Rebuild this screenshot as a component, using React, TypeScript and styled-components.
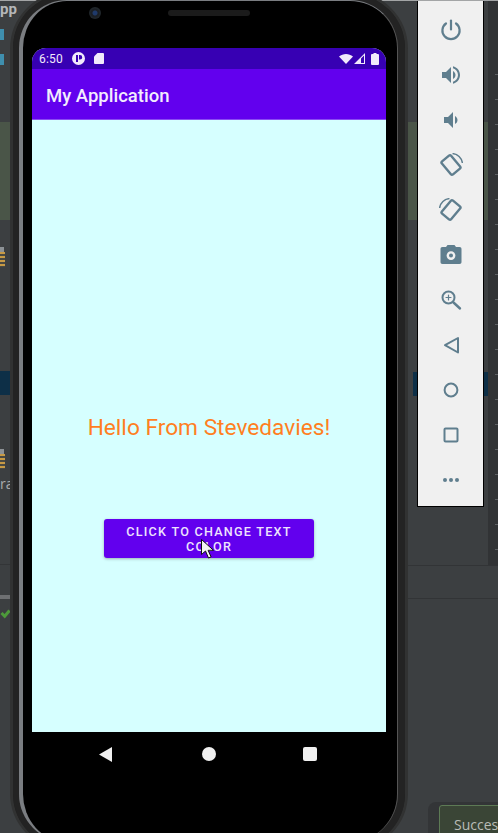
import React from "react";
import styled, { createGlobalStyle } from "styled-components";

const GlobalStyle = createGlobalStyle`
  html, body {
    margin: 0;
    padding: 0;
    background: #3c3f41;
  }
`;

const Stage = styled.div`
  width: 498px;
  height: 833px;
  overflow: hidden;
  position: relative;
  background: #3c3f41;
  font-family: Roboto, "Liberation Sans", sans-serif;
`;

const TopEdge = styled.div`
  height: 1px;
  background: #a3a5a6;
`;

const Desk = styled.div`
  display: flex;
  height: 832px;
`;

/* the strip of the IDE showing left of the phone */
const LeftGutter = styled.div`
  width: 10px;
  flex: none;
  display: flex;
  flex-direction: column;
  align-items: flex-start;
`;

const ClippedTitle = styled.div`
  margin-top: 0;
  font-size: 15px;
  line-height: 16px;
  font-weight: 700;
  color: #b4b6b8;
`;

const FileMark = styled.div<{ $top: number }>`
  margin-top: ${p => p.$top}px;
  width: 4px;
  height: 11px;
  flex: none;
  background: #3f8fae;
`;

const EditorBand = styled.div<{ $top: number; $height: number; $color: string; $inset?: number }>`
  margin-top: ${p => p.$top}px;
  margin-left: ${p => p.$inset ?? 0}px;
  align-self: stretch;
  height: ${p => p.$height}px;
  flex: none;
  background: ${p => p.$color};
`;

const GreyBlock = styled.div<{ $top: number }>`
  margin-top: ${p => p.$top}px;
  width: 4px;
  height: 5px;
  flex: none;
  background: #8d9296;
`;

const StackedLines = styled.div`
  width: 5px;
  height: 15px;
  flex: none;
  background: repeating-linear-gradient(#c79a45 0 2px, #4a4a44 2px 4px);
`;

const GutterLabel = styled.div`
  margin-top: 7px;
  font-family: "Open Sans", sans-serif;
  font-size: 14px;
  line-height: 16px;
  color: #a9abad;
`;

const CheckIcon = styled.svg`
  margin-top: 10px;
  margin-left: 1px;
  flex: none;
  overflow: visible;
`;

/* phone */
const PhoneShell = styled.div`
  width: 398px;
  height: 860px;
  flex: none;
  margin-top: -10px;
  box-sizing: border-box;
  border: 3px solid #313232;
  border-radius: 58px;
  background: #242424;
`;

const PhoneBody = styled.div`
  height: 100%;
  box-sizing: border-box;
  border: solid #232323;
  border-width: 6px 7px 6px 6px;
  border-radius: 54px;
  background: #2e2e2e;
`;

const MetalRim = styled.div`
  height: 100%;
  box-sizing: border-box;
  border: solid #7a7d81;
  border-width: 1px 1px 0 4px;
  border-right-color: #555;
  border-radius: 48px;
  background: #000;
  overflow: hidden;
  padding: 0 11px 0 9px;
`;

const TopBezel = styled.div`
  height: 47px;
  display: flex;
  align-items: flex-start;
  padding-top: 6px;
  box-sizing: border-box;
`;

const FrontCamera = styled.div`
  width: 12px;
  height: 12px;
  margin-left: 57px;
  border-radius: 50%;
  background: radial-gradient(circle, #1f3a6a 0 2px, #1b1f24 3px 4px, #20262b 5px);
`;

const Speaker = styled.div`
  width: 82px;
  height: 6px;
  margin: 3px 0 0 67px;
  border-radius: 3px;
  background: #1b1b1b;
`;

const Screen = styled.div`
  height: 684px;
  display: flex;
  flex-direction: column;
  border-radius: 14px 14px 0 0;
  overflow: hidden;
  background: #d6ffff;
`;

const StatusBar = styled.div`
  height: 21px;
  flex: none;
  display: flex;
  align-items: center;
  padding: 0 7px;
  background: #3700b3;
  color: #f1eafb;
  font-size: 12px;
`;

const StatusTime = styled.span`
  width: 34px;
  letter-spacing: 0.2px;
`;

const StatusIcon = styled.svg<{ $left?: number }>`
  flex: none;
  margin-left: ${p => p.$left ?? 0}px;
`;

const AppBar = styled.div`
  height: 51px;
  flex: none;
  display: flex;
  align-items: center;
  padding: 4px 0 0 14px;
  box-sizing: border-box;
  border-bottom: 1px solid #8a4df2;
  background: #6200ee;
  color: #f3ecfe;
  font-size: 18.5px;
  font-weight: 500;
`;

const Content = styled.div`
  flex: 1;
  display: flex;
  flex-direction: column;
  align-items: center;
  padding-top: 294px;
`;

const Greeting = styled.div`
  font-size: 22.7px;
  line-height: 28px;
  color: #ff7f1f;
`;

const ActionButton = styled.button`
  position: relative;
  width: 210px;
  height: 39px;
  margin-top: 77px;
  padding: 4px 16px;
  border: 0;
  border-radius: 3px;
  background: #6200ee;
  color: #eee3fd;
  font-family: inherit;
  font-size: 12.6px;
  font-weight: 500;
  line-height: 15px;
  letter-spacing: 1.25px;
  text-transform: uppercase;
  box-shadow: 0 1px 3px rgba(0, 0, 0, 0.3);
`;

const Pointer = styled.svg`
  position: absolute;
  left: 97px;
  top: 20px;
`;

const NavBar = styled.div`
  height: 44px;
  display: flex;
  align-items: center;
  justify-content: space-between;
  padding: 0 69px 0 67px;
`;

const NavIcon = styled.svg<{ $shift?: number }>`
  flex: none;
  margin-left: ${p => p.$shift ?? 0}px;
`;

/* everything right of the phone */
const RightRail = styled.div`
  flex: 1;
  min-width: 0;
  display: flex;
  flex-direction: column;
`;

const RailTop = styled.div`
  height: 564px;
  flex: none;
  display: flex;
`;

const SideStrip = styled.div<{ $width: number }>`
  width: ${p => p.$width}px;
  flex: none;
  display: flex;
  flex-direction: column;
`;

const EmulatorBar = styled.div`
  width: 67px;
  height: 506px;
  flex: none;
  box-sizing: border-box;
  display: flex;
  flex-direction: column;
  align-items: center;
  gap: 21px;
  padding-top: 17px;
  border: 1px solid #000;
  border-top: 0;
  background: #f0f0f0;
  color: #5f7e8e;
`;

const ToolIcon = styled.svg`
  width: 24px;
  height: 24px;
  flex: none;
`;

const CodePanel = styled.div`
  flex: 1;
  background:
    repeating-linear-gradient(transparent 0 24px, #5c5f62 24px 25px) right 49px / 3px 500px no-repeat,
    #313335;
`;

const RailDivider = styled.div<{ $top: number }>`
  height: 1px;
  flex: none;
  margin-top: ${p => p.$top}px;
  background: #323436;
`;

const ToastTray = styled.div`
  height: 31px;
  flex: none;
  margin: auto 0 0 20px;
  padding: 3px 0 0 11px;
  box-sizing: border-box;
  border-radius: 8px 0 0 0;
  background: #333537;
`;

const Toast = styled.div`
  height: 40px;
  width: 90px;
  padding-left: 14px;
  box-sizing: border-box;
  border: 1px solid #5d7a55;
  border-radius: 3px;
  background: #3a4536;
  color: #b9bcb6;
  font-family: "Open Sans", sans-serif;
  font-size: 14px;
  line-height: 37px;
  white-space: nowrap;
`;

const toolIcons: React.ReactNode[] = [
  <g key="power" fill="none" stroke="currentColor" strokeWidth="2.2" strokeLinecap="round">
    <path d="M12 2.5v9" />
    <path d="M7 5.5a8.6 8.6 0 1 0 10 0" />
  </g>,
  <path
    key="volume-up"
    fill="currentColor"
    d="M3 9v6h4l5 5V4L7 9H3zm13.5 3c0-1.77-1.02-3.29-2.5-4.03v8.05c1.48-.73 2.5-2.25 2.5-4.02zM14 3.23v2.06c2.89.86 5 3.54 5 6.71s-2.11 5.85-5 6.71v2.06c4.01-.91 7-4.49 7-8.77s-2.99-7.86-7-8.77z"
  />,
  <path
    key="volume-down"
    fill="currentColor"
    d="M18.5 12c0-1.77-1.02-3.29-2.5-4.03v8.05c1.48-.72 2.5-2.24 2.5-4.02zM5 9v6h4l5 5V4L9 9H5z"
  />,
  <g key="rotate-left" fill="none" stroke="currentColor">
    <rect x="6" y="3.5" width="12" height="17" rx="1.5" strokeWidth="2.4" transform="rotate(-40 12 12)" />
    <path d="M13.5.6A11 11 0 0 1 23.4 10" strokeWidth="1.5" />
  </g>,
  <g key="rotate-right" fill="none" stroke="currentColor" transform="matrix(-1 0 0 1 24 0)">
    <rect x="6" y="3.5" width="12" height="17" rx="1.5" strokeWidth="2.4" transform="rotate(-40 12 12)" />
    <path d="M13.5.6A11 11 0 0 1 23.4 10" strokeWidth="1.5" />
  </g>,
  <path
    key="camera"
    fill="currentColor"
    fillRule="evenodd"
    d="M8.5 2L7 4H3.5C2.1 4 1.5 4.9 1.5 6v13c0 1.1.6 2 2 2h17c1.4 0 2-.9 2-2V6c0-1.1-.6-2-2-2H17l-1.5-2h-7zM12 8.2a4.4 4.4 0 1 1 0 8.8 4.4 4.4 0 0 1 0-8.8zM12 10.6a2 2 0 1 0 0 4 2 2 0 0 0 0-4z"
  />,
  <g key="zoom" fill="none" stroke="currentColor" strokeLinecap="round">
    <circle cx="9.5" cy="9.5" r="6" strokeWidth="2" />
    <path d="M14.5 14.5l6.5 6" strokeWidth="2.4" />
    <path d="M9.5 7v5M7 9.5h5" strokeWidth="1.2" />
  </g>,
  <path key="back" d="M19 5v14.5L6 12.2z" fill="none" stroke="currentColor" strokeWidth="2" strokeLinejoin="round" />,
  <circle key="home" cx="12" cy="12" r="6.4" fill="none" stroke="currentColor" strokeWidth="2" />,
  <rect key="recent" x="5.5" y="5.5" width="13" height="13" rx="1" fill="none" stroke="currentColor" strokeWidth="2" />,
  <g key="more" fill="currentColor">
    <circle cx="6" cy="12" r="2" />
    <circle cx="12" cy="12" r="2" />
    <circle cx="18" cy="12" r="2" />
  </g>
];

export default function App() {
  return (
    <Stage>
      <GlobalStyle />
      <TopEdge />
      <Desk>
        <LeftGutter>
          <ClippedTitle>pp</ClippedTitle>
          <FileMark $top={12} />
          <FileMark $top={14} />
          <EditorBand $top={57} $height={98} $color="#4a5548" />
          <GreyBlock $top={27} />
          <StackedLines />
          <EditorBand $top={104} $height={24} $color="#0d2f47" />
          <GreyBlock $top={54} />
          <StackedLines />
          <GutterLabel>ra</GutterLabel>
          <EditorBand $top={72} $height={1} $color="#333537" />
          <EditorBand $top={30} $height={4} $color="#6e7072" />
          <CheckIcon width="9" height="9" viewBox="0 0 9 9">
            <path d="M.5 4l3.2 3.2L8.5 1.5" fill="none" stroke="#4d9a3a" strokeWidth="3" />
          </CheckIcon>
        </LeftGutter>

        <PhoneShell>
          <PhoneBody>
            <MetalRim>
              <TopBezel>
                <FrontCamera />
                <Speaker />
              </TopBezel>
              <Screen>
                <StatusBar>
                  <StatusTime>6:50</StatusTime>
                  <StatusIcon width="13" height="13" viewBox="0 0 13 13">
                    <path
                      fill="#f1eafb"
                      fillRule="evenodd"
                      d="M6.5 0a6.5 6.5 0 1 1 0 13 6.5 6.5 0 0 1 0-13zM4 3v7h2V3H4zm3 0v4.5h1a2.2 2.2 0 0 0 0-4.5H7z"
                    />
                  </StatusIcon>
                  <StatusIcon $left={9} width="10" height="11" viewBox="0 0 10 11">
                    <path fill="#f1eafb" d="M3.5 0H9a1 1 0 0 1 1 1v9a1 1 0 0 1-1 1H1a1 1 0 0 1-1-1V3.5z" />
                  </StatusIcon>
                  <StatusIcon $left={235} width="14" height="10" viewBox="0 0 14 10">
                    <path fill="#f1eafb" d="M0 2.6C4-.8 10-.8 14 2.6L7 10z" />
                  </StatusIcon>
                  <StatusIcon $left={1} width="11" height="11" viewBox="0 0 11 11">
                    <path fill="#f1eafb" d="M11 0v11H0zM10 2.5L7 5.5V10h3z" fillRule="evenodd" />
                  </StatusIcon>
                  <StatusIcon $left={6} width="8" height="12" viewBox="0 0 8 12">
                    <path fill="#f1eafb" d="M2.5 0h3v1H7a1 1 0 0 1 1 1v9a1 1 0 0 1-1 1H1a1 1 0 0 1-1-1V2a1 1 0 0 1 1-1h1.5z" />
                  </StatusIcon>
                </StatusBar>
                <AppBar>My Application</AppBar>
                <Content>
                  <Greeting>Hello From Stevedavies!</Greeting>
                  <ActionButton>
                    Click to change text color
                    <Pointer width="13" height="20" viewBox="0 0 13 20">
                      <path
                        d="M.5.5v15l4-3.5 3 7 2.6-1.1-3-6.6h5.4z"
                        fill="#f4f4f4"
                        stroke="#111"
                        strokeWidth="1"
                      />
                    </Pointer>
                  </ActionButton>
                </Content>
              </Screen>
              <NavBar>
                <NavIcon width="13" height="15" viewBox="0 0 13 15">
                  <path fill="#f0f0f0" d="M13 0v15L0 7.5z" />
                </NavIcon>
                <NavIcon $shift={3} width="14" height="14" viewBox="0 0 14 14">
                  <circle cx="7" cy="7" r="7" fill="#f0f0f0" />
                </NavIcon>
                <NavIcon width="14" height="14" viewBox="0 0 14 14">
                  <rect width="14" height="14" rx="2" fill="#f0f0f0" />
                </NavIcon>
              </NavBar>
            </MetalRim>
          </PhoneBody>
        </PhoneShell>

        <RightRail>
          <RailTop>
            <SideStrip $width={9}>
              <EditorBand $top={121} $height={98} $color="#4a5548" />
              <EditorBand $top={152} $height={24} $color="#0d2f47" $inset={5} />
            </SideStrip>
            <EmulatorBar>
              {toolIcons.map((icon, i) => (
                <ToolIcon key={i} viewBox="0 0 24 24">
                  {icon}
                </ToolIcon>
              ))}
            </EmulatorBar>
            <SideStrip $width={4}>
              <EditorBand $top={121} $height={98} $color="#4a5548" />
              <EditorBand $top={152} $height={24} $color="#0d2f47" />
            </SideStrip>
            <CodePanel />
          </RailTop>
          <RailDivider $top={0} />
          <RailDivider $top={32} />
          <ToastTray>
            <Toast>Success</Toast>
          </ToastTray>
        </RightRail>
      </Desk>
    </Stage>
  );
}
